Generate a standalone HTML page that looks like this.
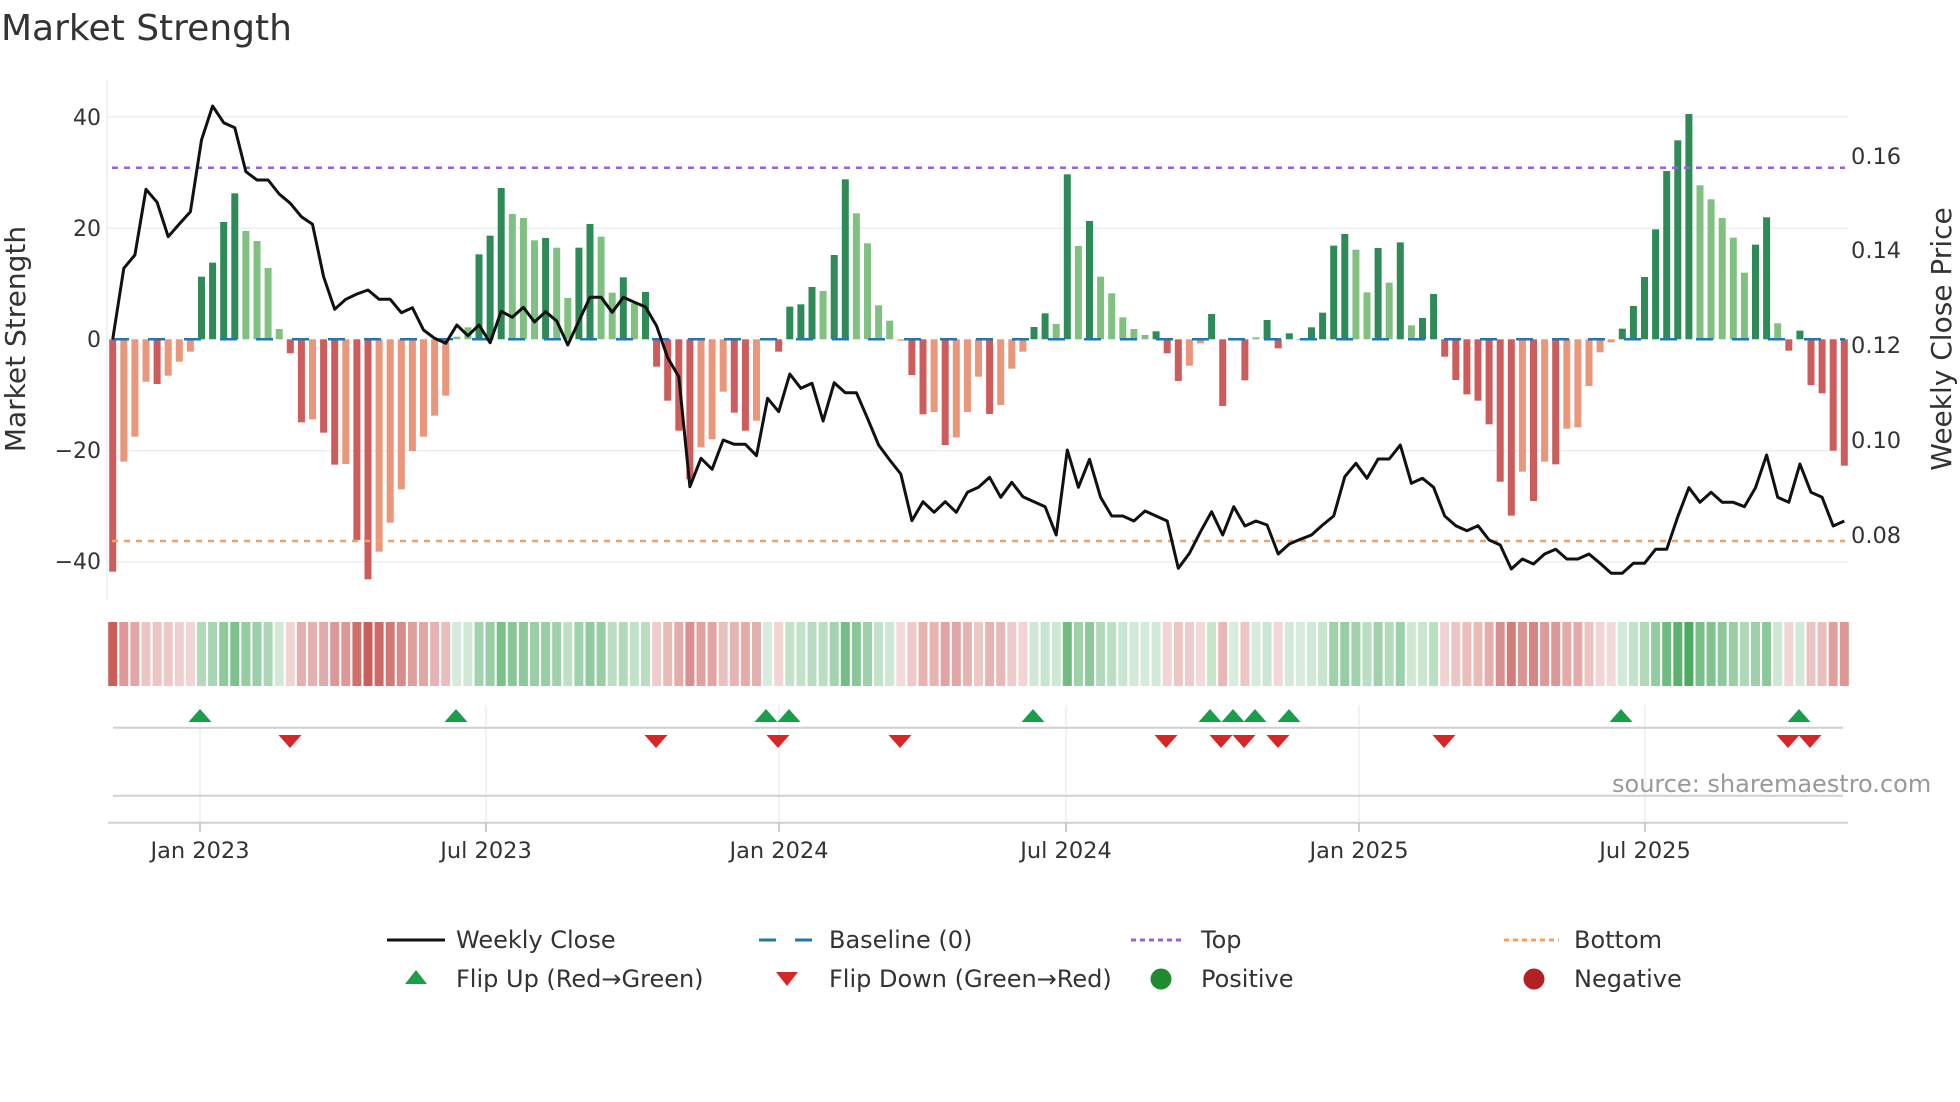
<!DOCTYPE html>
<html><head><meta charset="utf-8">
<style>
html,body{margin:0;padding:0;background:#fff;}
svg{display:block;font-family:"DejaVu Sans","Liberation Sans",sans-serif;}
</style></head>
<body>
<svg id="s" width="1960" height="1102" viewBox="0 0 1960 1102" xmlns="http://www.w3.org/2000/svg">
<text x="1" y="40" font-size="36" fill="#333">Market Strength</text>
<g stroke="#eceef2" stroke-width="1.5">
<line x1="107" y1="116.7" x2="1848" y2="116.7"/>
<line x1="107" y1="228.3" x2="1848" y2="228.3"/>
<line x1="107" y1="450.7" x2="1848" y2="450.7"/>
<line x1="107" y1="561.7" x2="1848" y2="561.7"/>
<line x1="107" y1="80" x2="107" y2="600"/>
</g>
<g font-size="22" fill="#333" text-anchor="end">
<text x="101" y="125">40</text>
<text x="101" y="236">20</text>
<text x="101" y="347">0</text>
<text x="101" y="458">−20</text>
<text x="101" y="569">−40</text>
</g>
<g font-size="22.5" fill="#333">
<text x="1851" y="164">0.16</text>
<text x="1851" y="258">0.14</text>
<text x="1851" y="353">0.12</text>
<text x="1851" y="448">0.10</text>
<text x="1851" y="543">0.08</text>
</g>
<text transform="translate(25,339) rotate(-90)" font-size="28" fill="#333" text-anchor="middle">Market Strength</text>
<text transform="translate(1951,339) rotate(-90)" font-size="28" fill="#333" text-anchor="middle">Weekly Close Price</text>
<g id="bars"></g>
<line x1="112" y1="339.3" x2="1845" y2="339.3" stroke="#1f77b4" stroke-width="2.5" stroke-dasharray="17,19"/>
<line x1="112" y1="167.7" x2="1845" y2="167.7" stroke="#9b5fe0" stroke-width="2.5" stroke-dasharray="6,6"/>
<line x1="112" y1="541" x2="1845" y2="541" stroke="#f4a261" stroke-width="2.5" stroke-dasharray="6,6"/>
<polyline id="price" fill="none" stroke="#111" stroke-width="3" stroke-linejoin="round"/>
<g id="heat"></g>
<g stroke="#eceef2" stroke-width="1.5" id="vg"></g>
<line x1="113" y1="727.7" x2="1843" y2="727.7" stroke="#d0d0d0" stroke-width="2"/>
<line x1="113" y1="795.7" x2="1843" y2="795.7" stroke="#d0d0d0" stroke-width="2"/>
<line x1="108" y1="822.7" x2="1848" y2="822.7" stroke="#d0d0d0" stroke-width="2"/>
<g id="tri"></g>
<text x="1612" y="792" font-size="24" fill="#999">source: sharemaestro.com</text>
<g font-size="22.5" fill="#333" text-anchor="middle">
<text x="200" y="858">Jan 2023</text>
<text x="486" y="858">Jul 2023</text>
<text x="779" y="858">Jan 2024</text>
<text x="1066" y="858">Jul 2024</text>
<text x="1359" y="858">Jan 2025</text>
<text x="1645" y="858">Jul 2025</text>
</g>
<g font-size="24" fill="#333">
<line x1="387" y1="940" x2="445" y2="940" stroke="#111" stroke-width="3"/>
<text x="456" y="948">Weekly Close</text>
<line x1="759" y1="940" x2="812" y2="940" stroke="#1f77b4" stroke-width="3" stroke-dasharray="17,19"/>
<line x1="795" y1="940" x2="812" y2="940" stroke="#1f77b4" stroke-width="3"/>
<text x="829" y="948">Baseline (0)</text>
<line x1="1131" y1="940" x2="1185" y2="940" stroke="#9b5fe0" stroke-width="3" stroke-dasharray="5,4"/>
<text x="1201" y="948">Top</text>
<line x1="1504" y1="940" x2="1559" y2="940" stroke="#f4a261" stroke-width="3" stroke-dasharray="5,4"/>
<text x="1574" y="948">Bottom</text>
<polygon points="405,984 427,984 416,970" fill="#1a9e4a"/>
<text x="456" y="987">Flip Up (Red→Green)</text>
<polygon points="776,972 798,972 787,986" fill="#d62728"/>
<text x="829" y="987">Flip Down (Green→Red)</text>
<circle cx="1161" cy="979" r="10.5" fill="#1e8c2e"/>
<text x="1201" y="987">Positive</text>
<circle cx="1534" cy="979" r="10.5" fill="#b22222"/>
<text x="1574" y="987">Negative</text>
</g>
</svg>
<script>
(function(){
var NS="http://www.w3.org/2000/svg";
var B=[1445,1115,1040,875,882,857,815,785,560,518,396,310,423,453,534,717,790,997,988,1028,1124,1122,1350,1468,1385,1298,1198,1083,1040,977,917,740,712,493,437,294,372,384,451,444,473,624,473,402,440,608,562,640,606,830,932,1022,1168,1072,1048,905,968,1022,992,748,785,650,643,591,603,495,268,370,460,646,692,752,855,973,966,1065,1042,966,860,972,945,836,785,711,670,702,253,468,393,560,610,682,717,735,724,790,873,827,760,672,948,748,871,742,690,775,730,748,712,668,467,432,479,607,474,578,457,706,684,612,800,870,913,932,1003,1175,1277,1145,1233,1115,1123,1016,1012,888,787,757,716,648,561,418,243,151,72,286,328,384,443,548,464,382,700,782,722,885,910,1082,1127];
var T="RSSSRSSS"+"DDDD"+"LLLL"+"RRSRRSRR"+"SSSSSSS"+"LL"+"DDD"+"LLL"+"DLLDDLLDLD"+"RRRR"+"SSS"+"RR"+"SS"+"R"+"DDD"+"L"+"DD"+"LLLL"+"S"+"RR"+"SRSSSRSSS"+"DDLDLD"+"LLLLL"+"D"+"RRSSDRRRLDRD"+"DDDDD"+"LLDLDLDD"+"RRRRRRR"+"SRSR"+"SSSSS"+"DDDDDDD"+"LLLLL"+"DDLRDRRRR";
var P=[748,535,495,298,337,440,402,365,150,48,98,113,245,270,270,312,340,380,403,560,658,628,612,600,628,628,668,653,720,745,760,705,737,705,758,664,682,652,696,665,693,765,693,622,622,667,622,637,651,708,803,860,1190,1105,1138,1050,1063,1063,1097,925,965,852,895,880,993,878,908,908,985,1065,1110,1152,1292,1235,1267,1235,1267,1207,1192,1162,1222,1177,1220,1235,1250,1335,1080,1192,1108,1222,1278,1278,1293,1263,1278,1293,1435,1390,1325,1265,1335,1250,1308,1293,1305,1392,1362,1348,1335,1305,1278,1160,1120,1165,1107,1107,1065,1180,1165,1192,1278,1307,1322,1307,1350,1365,1437,1407,1422,1392,1378,1407,1407,1392,1420,1450,1450,1420,1420,1378,1378,1280,1193,1237,1207,1237,1237,1250,1193,1095,1222,1237,1122,1207,1222,1308,1293];
var col={D:"#2e8b57",L:"#80c080",R:"#cd5c5c",S:"#e9967a"};
var bars=document.getElementById("bars"),heat=document.getElementById("heat");
var z=339.3,pts=[];
function mix(a,t){return "rgb("+a.map(function(c){return Math.round(255+(c-255)*t)}).join(",")+")";}
for(var i=0;i<B.length;i++){
 var cx=112.7+i*11.1, y=90+B[i]/3;
 var v=(748-B[i])/16.65;
 var r=document.createElementNS(NS,"rect");
 r.setAttribute("x",cx-3.5);r.setAttribute("width",7);
 r.setAttribute("y",Math.min(y,z));r.setAttribute("height",Math.max(Math.abs(y-z),0.5));
 r.setAttribute("fill",col[T[i]]||(v>=0?col.L:col.S));bars.appendChild(r);
 var t=0.2+0.72*Math.min(Math.abs(v)/42,1);
 var h=document.createElementNS(NS,"rect");
 h.setAttribute("x",cx-4.5);h.setAttribute("width",9);h.setAttribute("y",622);h.setAttribute("height",64);
 h.setAttribute("fill",v>=0?mix([56,160,80],t):mix([196,80,76],t));heat.appendChild(h);
 pts.push(cx.toFixed(1)+","+(90+P[i]/3).toFixed(1));
}
document.getElementById("price").setAttribute("points",pts.join(" "));
var vg=document.getElementById("vg");
[200,486,779,1066,1359,1645].forEach(function(x){
 var l=document.createElementNS(NS,"line");l.setAttribute("x1",x);l.setAttribute("x2",x);l.setAttribute("y1",705);l.setAttribute("y2",822);vg.appendChild(l);
 var k=document.createElementNS(NS,"line");k.setAttribute("x1",x);k.setAttribute("x2",x);k.setAttribute("y1",823);k.setAttribute("y2",832);k.setAttribute("stroke","#bbb");k.setAttribute("stroke-width","1.5");vg.parentNode.appendChild(k);
});
var tri=document.getElementById("tri");
[200,456,766,789,1033,1210,1233,1255,1289,1621,1799].forEach(function(x){
 var p=document.createElementNS(NS,"polygon");p.setAttribute("points",(x-11.5)+",722 "+(x+11.5)+",722 "+x+",709");p.setAttribute("fill","#1a9e4a");tri.appendChild(p);});
[290,656,778,900,1166,1221,1244,1278,1444,1788,1810].forEach(function(x){
 var p=document.createElementNS(NS,"polygon");p.setAttribute("points",(x-11.5)+",735 "+(x+11.5)+",735 "+x+",748");p.setAttribute("fill","#d62728");tri.appendChild(p);});
})();
</script>
</body></html>
